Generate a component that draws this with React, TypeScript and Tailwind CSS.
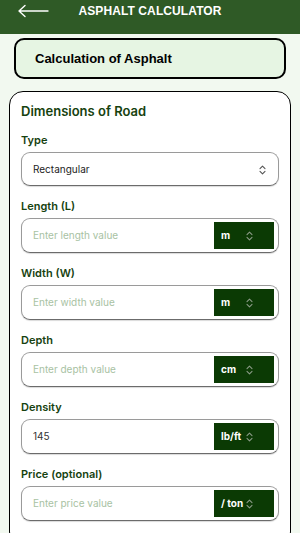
import { useState } from 'react';

const units: Record<string, string[]> = {
  length: ['m', 'cm', 'ft', 'in'],
  depth: ['cm', 'mm', 'in', 'm'],
  density: ['lb/ft', 'kg/m'],
  price: ['/ ton', '/ kg'],
};

function Chevrons({ className = '' }: { className?: string }) {
  return (
    <svg width="7" height="10" viewBox="0 0 7 10" className={className} fill="none">
      <path d="M1 3.6 3.5 1.2 6 3.6M1 6.4 3.5 8.8 6 6.4" stroke="currentColor" strokeWidth="1.1" strokeLinecap="round" strokeLinejoin="round" />
    </svg>
  );
}

function Field({
  label,
  placeholder,
  value,
  unit,
  options,
}: {
  label: string;
  placeholder: string;
  value?: string;
  unit: string;
  options: string[];
}) {
  const [val, setVal] = useState(value ?? '');
  const [u, setU] = useState(unit);
  return (
    <div className="flex flex-col">
      <label className="text-[11px] leading-[14px] font-semibold text-[#16420f] mb-[5px]">{label}</label>
      <div className="h-[35px] rounded-[9px] border border-[#9a9a9a] border-b-[#6b6b6b] shadow-[0_1px_1px_rgba(0,0,0,0.15)] bg-white flex items-center pl-[11px] pr-[4px]">
        <input
          value={val}
          onChange={(e) => setVal(e.target.value)}
          placeholder={placeholder}
          className="flex-1 min-w-0 bg-transparent outline-none text-[10px] text-[#333] placeholder:text-[#a8c2a3]"
        />
        <div className="relative w-[60px] h-[27px] bg-[#0b3a04] flex items-center pl-[7px]">
          <span className="text-[10px] font-bold text-white">{u}</span>
          <Chevrons className="absolute left-[32px] top-[8.5px] text-[#8a9a86]" />
          <select
            value={u}
            onChange={(e) => setU(e.target.value)}
            className="absolute inset-0 opacity-0 cursor-pointer"
          >
            {options.map((o) => (
              <option key={o}>{o}</option>
            ))}
          </select>
        </div>
      </div>
    </div>
  );
}

export default function App() {
  const [type, setType] = useState('Rectangular');

  return (
    <div className="min-h-screen bg-[#f2f9f0] font-['Inter',sans-serif] overflow-hidden">
      {/* header */}
      <div className="h-[34px] bg-[#2f5a26] flex items-start pt-[3px] relative">
        <button className="absolute left-[17px] top-[4px] text-white">
          <svg width="32" height="14" viewBox="0 0 32 14" fill="none">
            <path d="M31 7H2M8 1.5 2 7l6 5.5" stroke="currentColor" strokeWidth="1.4" strokeLinecap="round" strokeLinejoin="round" />
          </svg>
        </button>
        <h1 className="w-full text-center text-white text-[12px] leading-[16px] font-bold font-['Liberation_Sans',sans-serif] tracking-[0.1px]">
          ASPHALT CALCULATOR
        </h1>
      </div>

      <div className="px-[14px] pt-[4px]">
        <div className="h-[41px] rounded-[10px] border-2 border-black bg-[#e6f5e3] flex items-center px-[19px]">
          <h2 className="text-[13px] font-bold text-black font-['Liberation_Sans',sans-serif]">Calculation of Asphalt</h2>
        </div>
      </div>

      <div className="mx-[9px] mt-[12px] rounded-[14px] border border-black bg-white px-[11px] pt-[11px] pb-6">
        <h3 className="text-[13px] leading-[16px] font-semibold text-[#16420f] mb-[14px]">Dimensions of Road</h3>

        <div className="flex flex-col gap-[13px]">
          <div className="flex flex-col">
            <label className="text-[11px] leading-[14px] font-semibold text-[#16420f] mb-[5px]">Type</label>
            <div className="relative h-[34px] rounded-[9px] border border-[#9a9a9a] border-b-[#6b6b6b] shadow-[0_1px_1px_rgba(0,0,0,0.15)] bg-white flex items-center pl-[11px]">
              <span className="text-[10px] text-[#222]">{type}</span>
              <Chevrons className="absolute right-[12px] top-[12px] text-[#555]" />
              <select
                value={type}
                onChange={(e) => setType(e.target.value)}
                className="absolute inset-0 opacity-0 cursor-pointer"
              >
                <option>Rectangular</option>
                <option>Circular</option>
                <option>Triangular</option>
              </select>
            </div>
          </div>

          <Field label="Length (L)" placeholder="Enter length value" unit="m" options={units.length} />
          <Field label="Width (W)" placeholder="Enter width value" unit="m" options={units.length} />
          <Field label="Depth" placeholder="Enter depth value" unit="cm" options={units.depth} />
          <Field label="Density" placeholder="" value="145" unit="lb/ft" options={units.density} />
          <Field label="Price (optional)" placeholder="Enter price value" unit="/ ton" options={units.price} />
        </div>
      </div>
    </div>
  );
}
